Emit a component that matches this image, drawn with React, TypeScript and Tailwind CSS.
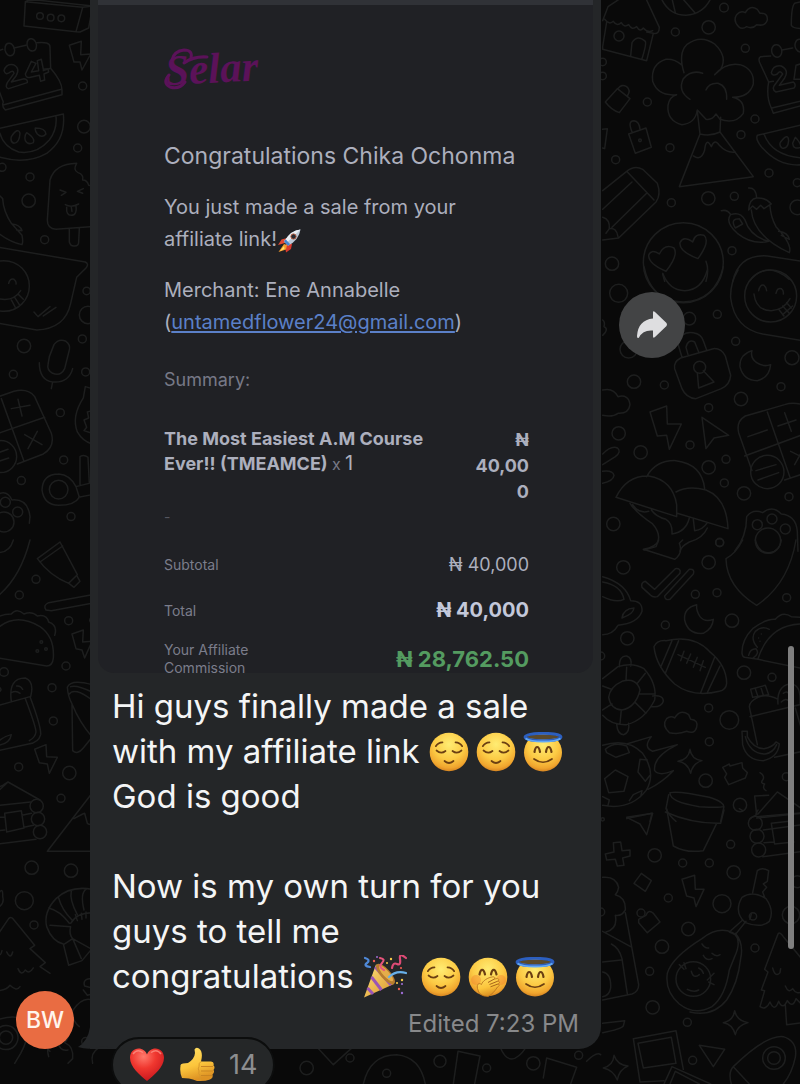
import type { ReactNode } from 'react';

type Dot = [number, number, number];
type Patch = { x: number; y: number; dots: Dot[]; lines: string[] };

// Each patch is drawn on a grid three times finer than the page.
const patches: Patch[] = [
  {
    x: 0,
    y: 0,
    dots: [
      [120, 48, 10], [152, 53, 10], [184, 55, 10], [248, 258, 12], [252, 380, 19], [233, 444, 12],
      [6, 502, 12], [90, 531, 12], [86, 602, 20], [134, 719, 12], [260, 873, 11], [264, 945, 26],
      [247, 1017, 12], [72, 1038, 20], [40, 1123, 12], [257, 1116, 12], [181, 1238, 12], [191, 1380, 12],
      [64, 1442, 12], [213, 1550, 12], [176, 1469, 28], [16, 1507, 15], [53, 1536, 15], [12, 858, 76],
      [2, 1370, 48], [12, 1566, 30],
    ],
    lines: [
      'M76 5 L248 22 L228 95 L72 78 Z M76 5 L90 -2 L278 18 L266 84 L240 96 L228 95 M248 22 L278 18',
      'M-4 152 L8 148 M42 144 L78 136 M110 128 Q150 124 150 140 L152 205 Q186 245 186 270 L186 284 L16 330 Q4 318 10 306 L-4 270 M152 205 L130 212 M12 314 L184 268',
      'M26 130 a14 19 -15 1 0 2 0z M92 116 a14 19 -15 1 0 2 0z',
      'M12 212 Q18 190 40 194 Q62 204 48 228 L34 246 L72 236 Q84 238 82 248 L26 266 Q14 264 22 248 L42 220 Q40 208 28 218 Q16 226 12 212Z',
      'M94 184 L76 222 Q78 236 92 232 L118 226 L122 244 L134 240 L132 222 L146 216 L144 206 L130 208 L124 178 L112 182 L116 212 L94 216 L108 190Z',
      'M-4 386 L190 342 Q198 420 140 460 Q80 494 0 472 M0 400 Q10 440 56 456 Q110 464 148 420 Q172 388 168 350 M34 410 q20-30 26-10 q-2 30-18 30 q-12-4-8-20z M80 398 q26 16 20 30 q-16 8-24-6 q-4-14 4-24z M106 384 q30 0 32 18 q-12 14-26 0 q-8-10-6-18z',
      'M208 136 L244 124 L242 164 L272 162 L246 210 L240 186 L222 186 Z',
      'M270 680 L168 688 Q142 686 142 660 L150 540 Q164 492 230 490 Q218 510 234 518 Q252 524 248 540 Q262 540 266 556 L276 558 M208 688 L208 726 Q212 740 224 738 Q236 738 236 726 L238 686 M180 570 L198 577 L184 586 M250 566 L232 574 L248 580 M196 614 Q214 624 236 612 M200 622 Q198 646 214 646 Q232 646 228 616 M214 622 L216 634',
      'M-4 584 L8 596 Q10 634 34 670 L66 706 Q70 726 66 734 Q30 726 -4 700 M36 672 Q60 674 66 692 L50 690',
      'M-4 742 L256 786 Q268 792 258 804 L230 832 L212 910 Q196 986 110 990 L-4 970 M26 850 q4-16 16-12 q8 6 6 14 M-4 896 Q40 906 62 872 M34 900 L46 922 M44 892 L58 914 M54 882 L70 898 M102 936 L114 950 L150 920 M130 948 L168 922',
      'M148 1070 L162 1034 Q176 1014 198 1024 Q212 1034 208 1050 L194 1106 Q182 1130 158 1120 Q140 1110 144 1094Z M118 1088 Q118 1140 158 1146 Q206 1150 218 1106 M158 1146 L154 1166',
      'M-4 1190 L42 1174 Q84 1164 104 1190 L154 1300 Q166 1340 130 1362 L52 1392 M4 1196 L72 1384 M-4 1300 L134 1252 M34 1226 L90 1216 M54 1198 L66 1248 M74 1304 L126 1334 M112 1294 L84 1346 M-4 1358 L24 1348 M-4 1384 L26 1374',
      'M276 1166 L256 1160 L250 1194 Q214 1250 232 1296 Q248 1324 276 1332 M276 1232 L262 1236 L266 1254 L252 1260 L260 1282 L252 1292 L276 1300',
      'M176 1422 Q210 1424 228 1460 L276 1448 M236 1492 L276 1484 M176 1516 Q224 1516 238 1492 M126 1470 Q128 1422 176 1422 M126 1470 Q132 1516 176 1516 M228 1460 L238 1492 M240 1454 L240 1370 Q252 1362 264 1372 L268 1450 M-4 1482 Q22 1470 36 1500 Q84 1496 90 1550 L88 1570',
    ],
  },
  {
    x: 0,
    y: 540,
    dots: [
      [108, 118, 12], [58, 165, 12], [206, 242, 12], [198, 378, 12], [156, 443, 12], [12, 396, 13],
      [160, 543, 12], [56, 681, 12], [208, 699, 20], [183, 775, 12], [95, 983, 20], [213, 992, 20],
      [73, 1082, 27], [102, 1155, 12], [110, 798, 20], [114, 837, 20], [120, 876, 20], [18, 1493, 20],
      [18, 1493, 36], [257, 1505, 12], [124, 306, 4], [112, 333, 4], [138, 327, 4],
    ],
    lines: [
      'M90 0 Q62 110 -4 166 M40 0 Q30 36 -4 38',
      'M112 56 L180 6 L232 104 L206 130 Q150 108 112 56Z M120 66 L188 18 M204 128 L222 142 L240 124 L230 106',
      'M276 164 L146 188 Q128 196 138 210 L154 212 L276 190 M276 230 Q262 240 276 252',
      'M-4 230 Q10 222 34 222 Q50 202 72 222 Q96 212 112 228 Q140 222 146 246 Q174 256 164 286 M-4 262 Q50 218 120 260 Q164 290 160 354 Q158 378 140 378 L-4 354',
      'M216 282 L250 270 L248 306 L276 304 L254 354 L246 330 L228 326Z',
      'M-4 496 L90 470 Q124 560 122 584 Q116 608 86 612 L-4 632 M76 476 Q108 560 108 576 Q106 592 88 602 M34 484 Q24 414 76 414 Q104 424 92 470 M50 438 Q62 436 68 448 M34 458 Q48 450 60 460 M-4 616 Q30 610 34 584 Q10 590 -4 604 M-4 440 Q10 450 -4 456',
      'M276 434 Q212 416 202 442 Q204 470 216 492 L218 632 Q232 646 250 624 L276 592 M216 492 Q240 550 276 590 M212 440 Q230 434 276 456 M208 462 Q222 440 276 480',
      'M104 628 L138 614 L140 650 L172 652 L148 700 L142 672 L118 668Z',
      'M-4 742 L8 736 L24 726 L120 780 M-4 752 L24 726 M-4 796 L92 786 M-4 912 L108 898 M-4 832 L12 832 M-4 872 L14 870 M14 820 L64 812 L72 864 L20 876Z M66 826 L94 820 M72 862 L100 856',
      'M276 760 L142 934 L276 934 M222 836 Q244 824 254 820 L262 850 Q270 856 276 852',
      'M-4 1060 Q10 1040 8 1070 Q14 1090 -4 1102',
      'M276 1048 Q210 1036 168 1076 Q130 1116 140 1160 Q156 1204 190 1212 L206 1276 L246 1262 L276 1226 M218 1196 L194 1212 M218 1196 L244 1256 M150 1156 L212 1160 Q206 1182 218 1196 L276 1228 M146 1104 Q180 1112 208 1150 M176 1074 Q186 1110 216 1140 M214 1052 Q208 1080 232 1124 M258 1048 Q240 1060 252 1110 M212 1150 Q230 1118 276 1118 M226 1124 l6 18 M244 1120 l2 18 M258 1116 l0 18',
      'M-4 1180 L26 1136 Q34 1128 42 1140 L104 1216 L90 1226 L136 1268 L120 1280 L150 1300 M-4 1352 Q20 1350 30 1336 Q50 1356 60 1340 M-4 1240 q6 10 10-8 M20 1236 q12 24 18 0 M54 1286 q10 24 22 4 q12 14 24-6',
      'M276 1316 Q246 1316 254 1338 L276 1344 M250 1350 L262 1366 L276 1362 M218 1412 Q246 1370 276 1380 M218 1412 Q214 1440 238 1460',
      'M-4 1438 Q60 1420 80 1450 Q90 1490 62 1540 L44 1570',
      'M146 1550 Q136 1516 160 1506 L146 1508 Q136 1524 150 1534 M166 1504 Q154 1470 172 1468 L186 1496 Q196 1462 208 1472 Q206 1496 194 1508 Q222 1520 218 1556 L204 1570 M176 1512 Q180 1534 204 1530 M278 1570 Q270 1540 296 1524 Q312 1510 340 1510',
    ],
  },
  {
    x: 596,
    y: 0,
    dots: [
      [238, 96, 12], [384, 23, 13], [338, 82, 20], [448, 145, 12], [69, 108, 15], [154, 306, 12],
      [132, 421, 4], [222, 443, 12], [59, 479, 12], [477, 357, 12], [435, 404, 12], [519, 519, 12],
      [604, 548, 12], [226, 608, 12], [337, 595, 20], [415, 589, 12], [408, 752, 12], [48, 791, 20],
      [604, 622, 22], [262, 788, 120], [20, 186, 11], [20, 228, 11],
    ],
    lines: [
      'M20 62 L36 20 L72 -4 M150 -4 L190 82 Q190 104 172 100 L152 96 M26 58 Q40 76 52 64 Q62 80 76 68 Q84 84 98 74 Q108 92 122 80 Q132 98 142 84 Q156 100 170 92 M32 66 L20 140 L20 148 L152 182 L172 100 M104 168 L108 128 Q124 102 148 124 Q152 132 138 176',
      'M196 -4 Q220 46 270 46 Q322 42 344 -4 M228 -4 L238 38 M260 -4 L298 40',
      'M428 80 Q410 62 422 44 Q434 30 448 38 Q462 14 484 28 L492 40 Q516 38 514 60 Q508 80 482 74 Q470 88 452 80 Q438 90 428 80Z',
      'M620 4 L596 10 Q586 20 586 76 Q590 86 620 86',
      'M264 218 Q246 160 272 134 Q314 102 356 132 Q396 170 374 208 L356 224 Q390 186 432 194 Q476 208 472 252 Q460 292 410 292 Q448 300 442 340 Q418 374 372 358 L360 342 Q348 362 330 358 L304 330 Q298 370 258 374 Q212 362 216 316 Q220 290 242 284 Q186 290 170 244 Q164 192 210 178 Q236 176 256 194 M282 298 Q244 274 262 236 Q286 208 320 220 M330 270 Q340 248 366 250 Q394 258 392 298',
      'M304 334 L312 402 L250 560 L472 530 L372 396 L374 352 M312 402 Q344 410 372 396 M292 468 Q316 484 326 450 Q330 410 346 440 Q356 414 370 436 Q392 460 418 456',
      'M28 306 L64 266 L102 296 L70 338 Q46 330 28 306Z M66 266 Q76 250 92 260 Q106 272 94 288',
      'M98 402 L150 384 L166 442 L118 460Z M108 396 Q94 362 114 362 Q130 364 132 388 M20 388 L34 386 L26 446 L20 444',
      'M20 572 L92 514 Q116 494 140 508 L184 550 Q196 584 180 606 L68 714 L20 720 M92 514 L174 600 M108 546 L20 628 M152 580 L48 682 M20 652 Q42 658 40 686 Q62 682 66 710 M40 686 L30 700',
      'M524 168 L494 170 Q484 176 494 194 L518 246 Q510 290 526 324 L532 340 L620 316 M518 246 L532 244 M528 324 L620 302 M558 150 L590 144 M540 134 a15 19 -10 1 0 2 0z M610 118 a15 19 -10 1 0 2 0z',
      'M526 218 Q532 194 556 198 Q580 210 566 234 L550 256 L592 246 Q602 254 594 264 L540 276 Q528 270 534 258 L560 222 Q552 208 544 222 Q530 230 526 218Z M620 190 L600 196 L594 238 L620 238',
      'M620 374 L484 406 Q478 418 496 440 Q548 502 620 494 M504 402 Q528 468 620 474 M554 426 q22-30 24-4 q-2 26-20 22 q-10-8-4-18z M598 412 q18 18 16 30 q-22 8-24-12z',
      'M376 632 Q396 628 404 644 M404 644 Q432 634 446 658 Q462 710 518 724 Q470 736 424 700 Q386 666 404 644 M414 676 Q406 656 430 656 L440 672 L418 684Z M458 564 Q480 562 482 594 M482 594 Q460 596 458 630 L470 618 L482 628 L494 616 L504 626 L526 612 Q508 592 482 594 M466 630 Q472 708 580 758 Q590 734 540 680 Q524 650 522 618 M548 694 Q576 698 580 718 L556 706',
      'M210 814 Q158 792 158 766 Q164 746 190 762 Q206 730 234 744 Q248 766 210 814Z M306 776 Q248 754 252 728 Q262 706 290 726 Q298 698 324 706 Q344 724 306 776Z M330 784 Q340 810 330 844 M200 822 L206 844',
      'M410 844 Q430 762 514 768 L620 784 M460 844 Q510 780 580 838',
    ],
  },
  {
    x: 596,
    y: 270,
    dots: [
      [68, 70, 27], [280, 146, 19], [364, 133, 12], [98, 238, 26], [419, 214, 12], [588, 263, 21],
      [114, 335, 20], [205, 345, 12], [555, 350, 12], [435, 387, 20], [338, 413, 12], [68, 490, 20],
      [282, 525, 12], [134, 547, 20], [390, 568, 12], [338, 592, 20], [385, 639, 12], [444, 670, 20],
      [579, 680, 12], [52, 762, 20], [371, 817, 12], [524, 78, 78], [514, 606, 50], [484, 764, 15],
      [528, 747, 15], [568, 777, 15], [516, 812, 38], [311, 292, 18],
    ],
    lines: [
      'M144 -10 Q164 94 262 96 Q358 92 382 -10 M200 10 Q220 62 266 62 Q318 60 334 0',
      'M426 0 Q402 40 404 84 Q416 176 500 192 L620 212 M488 62 q4-20 16-16 q8 6 8 16 M540 70 q4-18 16-14 q8 6 6 16 M474 72 Q480 122 526 122 Q564 120 582 86 M548 118 L564 138 M560 108 L580 130 M572 98 L586 114 M560 134 L590 108',
      'M236 296 Q232 276 254 264 L352 236 Q376 234 388 258 L404 316 Q402 344 376 356 L300 386 Q270 384 258 356Z M258 262 L246 222 Q254 182 292 188 Q316 192 322 212 L332 240 M276 254 L270 232 Q276 206 296 216 L308 246 M304 308 L308 354 L354 336 L322 302',
      'M468 242 Q430 254 432 290 Q442 332 484 332 Q520 324 524 284 Q502 292 482 278 Q462 264 468 242Z',
      'M20 360 Q52 352 66 380 Q98 372 102 404 Q98 432 66 430 Q50 442 20 436 M20 150 Q28 156 24 170 Q40 178 20 196 M20 552 Q46 526 64 534 Q78 544 58 560 L20 584 M20 604 Q50 600 54 616 Q52 632 20 640',
      'M162 426 L212 408 L214 462 L256 462 L220 538 L212 496 L184 498Z M318 442 L398 496 L354 504 L330 536Z',
      'M620 404 Q590 396 566 404 L448 438 Q420 454 428 488 L468 602 M514 426 L582 622 M446 558 L620 494 M456 500 L514 480 M546 468 L600 450 M566 428 L586 484 M566 630 L620 612 M584 544 L620 562 M620 540 L596 584 M480 602 L540 584 M486 630 L548 608',
      'M60 682 Q92 616 158 618 Q230 630 242 704 L242 740Z M152 620 Q180 570 240 572 Q318 582 326 656 M240 666 Q276 646 330 660 Q392 684 396 776 L244 730 M102 700 Q118 726 170 762 Q200 796 180 830 L144 840 M110 704 Q128 732 158 724 M166 720 Q180 740 210 748 Q230 760 228 792 Q270 786 280 744 M292 748 L296 782 Q320 780 334 758 M334 774 Q320 806 280 816 Q254 830 252 844',
      'M416 844 Q452 800 452 740 Q470 716 500 728 Q530 704 556 732 Q600 736 604 784 L606 844',
    ],
  },
  {
    x: 596,
    y: 540,
    dots: [
      [82, 82, 20], [338, 67, 20], [371, 8, 12], [298, 163, 12], [363, 158, 12], [572, 173, 12],
      [208, 255, 12], [408, 242, 20], [94, 295, 20], [444, 398, 20], [528, 412, 12], [338, 504, 12],
      [400, 540, 28], [340, 605, 12], [329, 722, 20], [432, 795, 20], [571, 710, 12], [14, 348, 12],
    ],
    lines: [
      'M188 0 Q180 22 142 28 L236 58 Q262 40 250 10 L260 0 M440 0 Q420 40 390 56 Q392 140 482 196 Q578 132 600 0 M478 0 Q488 40 520 38 Q552 34 556 0',
      'M138 142 Q134 128 148 124 L176 148 L238 86 Q256 84 252 100 L184 170 Q172 174 162 164Z M206 168 L280 88 Q298 86 292 102 L222 178 Q206 182 206 168Z',
      'M20 110 Q90 130 104 182 Q140 182 138 214 Q126 250 66 256 Q50 284 20 284 M20 126 Q76 136 84 178 Q60 190 20 170 M78 234 Q82 206 114 204 Q112 222 78 234Z',
      'M302 194 Q262 204 266 240 Q276 284 322 280 Q350 266 352 238 Q326 248 312 230 Q300 212 302 194Z',
      'M174 320 Q182 300 210 302 Q294 284 340 334 Q392 376 392 430 Q390 450 370 454 Q290 474 236 432 Q180 380 174 320Z M228 302 L194 382 M248 302 L208 400 M356 352 L314 458 M372 378 L334 458 M246 344 L328 382 M264 334 L254 362 M284 342 L272 370 M304 352 L292 382 M322 362 L312 392',
      'M438 342 Q436 300 470 266 Q510 236 538 238 Q560 212 586 230 L620 232 M446 352 Q438 350 438 336 M446 352 L486 358 L620 386 M486 356 Q520 252 620 252 M484 322 Q462 296 478 274 Q498 256 520 268 M458 346 Q462 326 480 326 Q492 340 472 354 M488 294 v0 M496 282 v0 M492 304 v0',
      'M20 416 L66 380 Q110 366 144 386 Q184 430 176 480 Q146 540 92 554 Q46 556 20 526 M38 472 Q42 440 78 424 Q122 412 132 450 Q120 502 78 510 Q44 508 38 472Z M92 382 L90 422 M148 400 L124 430 M176 462 L132 462 M150 520 L118 488 M72 550 L76 510 M20 510 L48 492 M20 438 L46 448 M70 380 Q70 346 92 348 Q110 354 104 378 M170 468 Q202 464 202 484 Q196 504 164 500 M62 552 Q64 584 84 584 Q102 576 98 550',
      'M220 578 Q196 556 212 536 Q224 526 236 534 Q252 506 278 524 L284 538 Q308 540 302 562 Q296 584 272 574 Q248 584 220 578Z',
      'M20 616 Q94 592 140 640 Q182 700 150 752 Q102 812 20 796 M28 628 Q54 604 92 618 L100 638 L60 652 L32 638Z M26 716 L58 690 L96 710 L84 754 L38 758Z M154 660 L132 658 L126 696 L148 724 L162 706 M100 782 L112 764 L138 752 L134 770 M20 770 L40 780 L36 796 M92 612 L166 590 Q140 622 170 634 L244 614 Q170 650 176 692 Q190 710 232 692 Q200 726 156 748',
      'M282 628 Q286 658 318 662 Q290 670 284 700 Q276 668 246 664 Q278 658 282 628Z',
      'M380 682 L400 672 L402 678 L438 668 L440 684 L454 698 L448 714 L398 734 L386 712 L392 702Z',
      'M462 530 L620 492 M460 500 Q460 484 486 472 Q514 460 546 478 M464 448 L508 436 L518 464 L470 472Z M478 446 L486 470 M494 440 L502 466 M460 500 L484 614 M546 492 Q542 440 580 432 Q616 430 612 490 M562 460 Q574 450 580 464 M556 486 Q570 472 580 484 M598 504 L620 580 M536 652 L620 634 M438 574 L454 574 L454 590 Q472 626 504 626 Q530 622 540 606 L550 612 Q546 652 502 662 Q452 662 440 614Z M448 590 Q462 642 508 642 Q532 638 542 614',
      'M492 698 Q508 708 500 720 Q492 730 506 732 Q498 746 510 752 M222 758 Q250 752 340 772 Q388 788 382 800 Q370 804 310 800 Q220 786 222 758Z M218 764 L210 806 Q220 828 240 844 M384 800 L374 844 M92 836 L168 820 L162 844',
      'M476 768 L518 766 M476 768 L482 824 L462 836 M486 822 L544 756 L620 808 M482 834 L620 820',
    ],
  },
  {
    x: 596,
    y: 810,
    dots: [
      [176, 136, 20], [404, 103, 12], [260, 159, 12], [340, 159, 12], [413, 187, 20], [217, 264, 12],
      [378, 281, 27], [277, 357, 20], [198, 410, 20], [477, 414, 12], [585, 315, 26], [161, 484, 12],
      [170, 592, 20], [274, 637, 12], [290, 751, 12], [292, 507, 52], [534, 744, 34], [534, 744, 19],
      [604, 215, 18], [478, 40, 21], [483, 79, 21], [488, 120, 21], [471, 319, 11], [135, 309, 12],
      [14, 306, 12], [20, 28, 5],
    ],
    lines: [
      'M92 22 L170 10 L152 74 L132 42Z M212 -4 L232 108 Q270 130 322 122 L362 40 M208 6 Q290 42 374 40 L384 0 M430 -4 L440 2',
      'M52 98 L74 96 L78 122 L102 120 L102 138 L80 144 L84 166 L64 168 L58 148 L32 150 L28 132 L54 126Z M136 190 L166 212 L148 244 L114 220Z M258 208 L296 196 L298 238 L324 238 L300 290 L294 264 L272 258Z',
      'M128 328 L150 316 Q158 296 172 310 L192 336 L154 368 L128 338Z',
      'M20 202 Q60 198 68 232 Q66 246 58 254 Q90 262 88 300 Q76 320 58 316 Q66 356 30 366 M88 308 L128 524 Q128 544 108 552 L20 570 M20 364 L104 410 M46 402 Q70 414 78 446 L94 552 M20 456 L76 450 M20 486 Q46 490 44 534 Q40 558 20 560 M20 640 L86 632 L82 648 Q76 658 20 668',
      'M470 248 L484 182 Q498 170 518 182 L514 214 L502 222 L512 232 L500 246 L506 262 M438 262 Q470 240 510 266 Q536 302 520 334 Q496 356 448 338 Q412 306 438 262Z M450 334 L418 374 L400 366 L440 330 M466 312 L462 328',
      'M318 386 Q366 348 410 368 Q440 388 416 440 L400 480 Q388 560 348 590 Q296 618 250 582 Q206 544 214 490 Q228 442 318 386Z M418 370 Q444 400 434 446 Q426 520 392 570 Q350 622 282 606 M318 402 q8 14 20 12 M348 430 q12 12 24 4 M322 436 q10 18 26 10 M250 464 L264 478 M264 458 L270 476 M334 510 L354 490 M338 516 L354 524 M286 484 q6 24 24 10 M308 474 q10 4 14 16 M274 538 q20 10 34 2',
      'M546 372 L506 478 L516 486 L496 540 L506 542 L492 590 Q510 602 522 576 Q536 608 548 574 Q560 602 574 572 Q590 596 600 566 L620 586 M546 372 Q552 364 562 380 L620 450 M530 474 q8 30 22 14 l2-12 M568 528 q10 24 22 8 q12 20 30 8 M568 584 L572 644 L620 638',
      'M620 8 L484 20 M486 0 L480 12 M620 44 L502 60 M526 40 L580 34 M526 40 L536 102 L594 96 M504 98 L534 96 M620 124 L500 140',
      'M416 602 Q422 632 456 638 Q424 646 418 674 Q410 642 382 638 Q412 632 416 602Z M54 736 Q64 766 96 768 Q70 778 64 810 Q52 780 22 774 Q52 766 54 736Z',
      'M112 686 L240 662 L262 778 M112 686 L132 816 L204 812 M126 700 L226 682 L240 760 L142 774Z M204 822 L228 770 L344 822 M222 822 L238 784 L310 822 M310 706 L386 718 L352 770Z',
      'M412 770 Q510 674 562 680 Q606 694 598 742 Q588 790 562 822 M412 770 Q396 786 406 822 M412 770 L460 822',
    ],
  },
  {
    x: 300,
    y: 1048,
    dots: [
      [20, 60, 20], [150, 30, 12], [260, 76, 12], [420, 40, 18], [560, 60, 12], [700, 46, 20], [836, 22, 12],
    ],
    lines: [
      'M50 -4 L100 50 L160 -4 M190 108 Q210 20 290 20 Q360 26 376 108 M460 108 L474 10 L540 24 L524 108 M600 -4 Q630 70 680 -4 M740 30 L830 58 L812 108 M740 30 L730 90 M860 40 Q890 10 902 20',
    ],
  },
];

function Wallpaper() {
  return (
    <svg
      className="absolute left-0 top-0 h-[1084px] w-[800px]"
      viewBox="0 0 800 1084"
      fill="none"
      stroke="#1d1e1e"
      strokeWidth="4.5"
      strokeLinecap="round"
      strokeLinejoin="round"
      aria-hidden="true"
    >
      {patches.map((p) => (
        <g key={`${p.x}-${p.y}`} transform={`translate(${p.x} ${p.y}) scale(0.3333)`}>
          {p.dots.map(([cx, cy, r], i) => (
            <circle key={i} cx={cx} cy={cy} r={r} />
          ))}
          {p.lines.map((d, i) => (
            <path key={i} d={d} />
          ))}
        </g>
      ))}
    </svg>
  );
}

function EmojiPaint() {
  return (
    <svg className="absolute h-0 w-0" aria-hidden="true">
      <defs>
        <radialGradient id="face" cx="0.5" cy="0.3" r="0.72">
          <stop offset="0" stopColor="#ffec73" />
          <stop offset="0.55" stopColor="#fccb45" />
          <stop offset="0.85" stopColor="#f0a52e" />
          <stop offset="1" stopColor="#cf7c1e" />
        </radialGradient>
        <radialGradient id="heart" cx="0.4" cy="0.25" r="0.8">
          <stop offset="0" stopColor="#ff7a6c" />
          <stop offset="0.45" stopColor="#f0372f" />
          <stop offset="1" stopColor="#c4141c" />
        </radialGradient>
        <linearGradient id="hand" x1="0" y1="0" x2="0.3" y2="1">
          <stop offset="0" stopColor="#ffe066" />
          <stop offset="0.6" stopColor="#fcc53c" />
          <stop offset="1" stopColor="#dd9223" />
        </linearGradient>
        <linearGradient id="cone" x1="0" y1="0" x2="1" y2="1">
          <stop offset="0" stopColor="#ffe27a" />
          <stop offset="1" stopColor="#d9932c" />
        </linearGradient>
      </defs>
    </svg>
  );
}

function Emoji({ label, children }: { label: string; children: ReactNode }) {
  return (
    <svg className="inline-block h-10 w-10 shrink-0" viewBox="0 0 40 40" role="img" aria-label={label}>
      {children}
    </svg>
  );
}

function Relieved() {
  return (
    <Emoji label="Relieved face">
      <circle cx="20" cy="20" r="19.3" fill="url(#face)" />
      <g fill="none" stroke="#6b3f12" strokeWidth="1.7" strokeLinecap="round">
        <path d="M6.800 14.200Q9 10.600 13.500 10.400M33.200 14.200Q31 10.600 26.500 10.400" />
        <path d="M7.500 18.500Q12 22.500 16.500 19M32.500 18.500Q28 22.500 23.500 19" />
        <path d="M15.500 29Q20 33 24.500 29" />
      </g>
    </Emoji>
  );
}

function Halo() {
  return (
    <Emoji label="Smiling face with halo">
      <circle cx="20" cy="20.500" r="19" fill="url(#face)" />
      <ellipse cx="20" cy="5" rx="16" ry="2.600" fill="#5b4a2c" />
      <ellipse cx="20" cy="5" rx="18" ry="3.700" fill="none" stroke="#2c5fc0" strokeWidth="2.800" />
      <path d="M2.500 6.500Q7 9.500 20 9.500T37.500 6.500" fill="none" stroke="#62a8f4" strokeWidth="1.800" />
      <g fill="none" stroke="#6b3f12" strokeWidth="2.200" strokeLinecap="round">
        <path d="M11.500 20Q12.300 15 14.200 15T17 20M23 20Q23.800 15 25.700 15T28.500 20" />
        <path d="M11 27Q20 33.500 29 27" strokeWidth="1.700" />
      </g>
    </Emoji>
  );
}

function Giggle() {
  return (
    <Emoji label="Face with hand over mouth">
      <circle cx="20" cy="20" r="19.300" fill="url(#face)" />
      <circle cx="8" cy="23" r="5" fill="#f2762e" opacity="0.350" />
      <circle cx="33" cy="23" r="5" fill="#f2762e" opacity="0.350" />
      <path d="M11.500 17.500Q12.300 12.800 14.200 12.800T17 17.500M23 17.500Q23.800 12.800 25.700 12.800T28.500 17.500" fill="none" stroke="#6b3f12" strokeWidth="2.200" strokeLinecap="round" />
      <path d="M9.500 31.500C8.500 27 11 25.500 13.500 27.500C14.500 24 19.500 20.500 25 19.800C27 19.500 27.500 21.500 26 22.200L29 21.600C31.300 21.500 31.200 23.500 29.700 24.200C32 24.200 32 26.200 30 27C31.800 27.200 31.500 29.200 29.500 30C27 34 24 37.500 20 39.500Q11 39.500 9.500 31.500Z" fill="url(#hand)" stroke="#b56e1c" strokeWidth="0.800" />
      <path d="M20 25.500L26 22.200M21.500 27.500L29.700 24.200M22.500 29.800L30 27" stroke="#a8651b" strokeWidth="1" fill="none" />
    </Emoji>
  );
}

function Party() {
  return (
    <svg className="inline-block h-11 w-11 shrink-0" viewBox="0 0 44 44" role="img" aria-label="Party popper">
      <path d="M1 42.500L13 9.500Q23 12 31 29Z" fill="url(#cone)" />
      <path d="M12.200 12L28 30M8.500 22L18.500 35M4.500 33L10 39" stroke="#9a55b5" strokeWidth="3" />
      <ellipse cx="22.500" cy="19" rx="5" ry="13" transform="rotate(-42 22.500 19)" fill="#b77c2e" />
      <ellipse cx="23" cy="18.500" rx="3" ry="10" transform="rotate(-42 23 18.500)" fill="#e5ad4b" />
      <g fill="none" strokeWidth="2.200" strokeLinecap="round">
        <path d="M17 3Q23 4 19 8T21 15" stroke="#e7547c" />
        <path d="M29 13Q30 7 34 9T37 4T43 3" stroke="#dd4b76" />
        <path d="M26 22Q33 15 43 18" stroke="#68b0ea" />
        <path d="M2 3Q8 5 4 8T7 12" stroke="#4f89d8" />
      </g>
      <g fill="#ef5d51"><circle cx="11" cy="6" r="1.200" /><circle cx="38" cy="13" r="1.100" /><circle cx="36" cy="34" r="1.200" /></g>
      <g fill="#f4c84a"><circle cx="28" cy="4" r="1.200" /><circle cx="39" cy="25" r="1.200" /><circle cx="34" cy="28" r="1.100" /><circle cx="24" cy="8" r="1" /></g>
      <g fill="#9c6bd1"><circle cx="14" cy="2" r="1" /><circle cx="39" cy="29" r="1.100" /><circle cx="39" cy="38" r="1.200" /></g>
    </svg>
  );
}

function Rocket() {
  return (
    <svg className="inline-block h-6 w-6" viewBox="0 0 24 24" role="img" aria-label="Rocket">
      <path d="M8 14L1 16L4.500 10.500L10 9Z" fill="#e04a35" />
      <path d="M10 14L15 15L14 20L9 23.500L8 17Z" fill="#d83a2e" />
      <path d="M7 15L1.500 23L9 20.500L10 16Z" fill="#f39a2b" />
      <path d="M7 17L3 22L7.500 20Z" fill="#ffe26b" />
      <path d="M23.500 .5Q14 1 7 12.500L11 16.800Q22 11 23.500 .5Z" fill="#bcc8d6" />
      <path d="M23.500 .5Q14 1 7 12.500L9 14.500Z" fill="#e8edf3" />
      <path d="M7 12.500L8.600 10.200L13.200 15.200L11 16.800Z" fill="#4585cf" />
      <circle cx="16.500" cy="7.500" r="2.600" fill="#252a33" stroke="#b0583c" strokeWidth="1" />
    </svg>
  );
}

function Heart() {
  return (
    <svg className="h-9 w-9" viewBox="0 0 36 36" role="img" aria-label="Red heart">
      <path d="M18 34C11 28.500 1 20 1 10.800C1 5 5 1.500 9.500 1.500C13.500 1.500 16.700 4 18 7.500C19.300 4 22.500 1.500 26.500 1.500C31 1.500 35 5 35 10.800C35 20 25 28.500 18 34Z" fill="url(#heart)" />
      <path d="M4 7Q8 1.500 14 5.500M22 5.500Q28 1.500 32 7" fill="none" stroke="#ff9b8f" strokeWidth="1.500" opacity="0.700" />
    </svg>
  );
}

function Thumb() {
  return (
    <svg className="h-9 w-9" viewBox="0 0 36 36" role="img" aria-label="Thumbs up">
      <path d="M1.500 19Q1 17 4 16.500L9 16Q15.500 12 16 6L15.500 2.500Q17 -.5 20 1.500Q24.500 5 22 14.500H32Q35.500 15 34.500 18.500Q36.500 20 34.500 23Q36 25 33.500 27.500Q34.500 31.500 31 32.500Q26 34.500 18 34Q14 32 10 31.500L3 31Q.5 25 1.500 19Z" fill="url(#hand)" />
      <path d="M22 19.500H34M22 24H34M22 28.500H33" stroke="#c98522" strokeWidth="1.100" />
      <path d="M22 14.500Q19.500 16 20 19.500Q18.500 22 20 24Q19 27 21 28.500Q20 31 22 33" fill="none" stroke="#d9982c" strokeWidth="1" />
    </svg>
  );
}

function Receipt() {
  return (
    <section className="mx-2 h-[673px] rounded-b-2xl border-t-[5px] border-[#303237] bg-[#202125] pl-[66px] pr-16 text-[#acafbd]">
      <svg className="-ml-2 mt-6 h-16 w-32" viewBox="0 0 128 64" role="img" aria-label="Selar">
        <text
          x="9"
          y="54"
          transform="rotate(-3 50 40)"
          className="fill-[#5b1259] font-['Liberation_Serif',serif] text-[43px] font-bold italic"
        >
          Selar
        </text>
        <path d="M28 34Q38 27 51 28" fill="none" stroke="#5b1259" strokeWidth="3" strokeLinecap="round" />
        <path d="M35 29Q37 21 28 21Q18 22 16 31" fill="none" stroke="#5b1259" strokeWidth="3" strokeLinecap="round" />
        <path d="M13 46Q6 54 14 58Q23 61 29 53" fill="none" stroke="#5b1259" strokeWidth="3" strokeLinecap="round" />
      </svg>
      <h1 className="mt-[47px] text-[23px] leading-8">Congratulations Chika Ochonma</h1>
      <p className="mt-[19px] text-[20px] leading-8">
        You just made a sale from your
        <br />
        affiliate link!
        <Rocket />
      </p>
      <p className="mt-[19px] text-[20px] leading-8">
        Merchant: Ene Annabelle
        <br />(
        <a href="mailto:untamedflower24@gmail.com" className="text-[#5b80c8] underline decoration-2 underline-offset-2">
          untamedflower24@gmail.com
        </a>
        )
      </p>
      <h2 className="mt-[30px] text-[18px] leading-6 text-[#777987]">Summary:</h2>
      <table className="mt-[35px] w-full table-fixed border-collapse text-left">
        <colgroup>
          <col className="w-[110px]" />
          <col />
          <col className="w-[60px]" />
        </colgroup>
        <tbody>
          <tr className="align-top">
            <th scope="row" colSpan={2} className="whitespace-nowrap text-[18px] font-bold leading-6">
              The Most Easiest A.M Course
              <br />
              Ever!! (TMEAMCE) <span className="text-[16px] font-normal text-[#777987]">x</span>{' '}
              <span className="text-[20px] font-normal leading-6">1</span>
            </th>
            <td className="text-right text-[18px] font-bold leading-[26px]">
              ₦<br />
              40,00
              <br />0
            </td>
          </tr>
          <tr className="h-9 align-top">
            <td colSpan={3} className="text-[14px] leading-6 text-[#55565f]">
              -
            </td>
          </tr>
          <tr className="h-[46px]">
            <th scope="row" className="text-[14px] font-normal text-[#7b7d8b]">Subtotal</th>
            <td colSpan={2} className="text-right text-[18px]">₦ 40,000</td>
          </tr>
          <tr className="h-[46px]">
            <th scope="row" className="text-[14px] font-normal text-[#7b7d8b]">Total</th>
            <td colSpan={2} className="text-right text-[20px] font-bold text-[#c3c8da]">₦ 40,000</td>
          </tr>
          <tr className="h-[52px]">
            <th scope="row" className="text-[14px] font-normal leading-[18px] text-[#7b7d8b]">Your Affiliate Commission</th>
            <td colSpan={2} className="whitespace-nowrap text-right text-[22px] font-bold text-[#549b60]">₦ 28,762.50</td>
          </tr>
        </tbody>
      </table>
    </section>
  );
}

export default function App() {
  return (
    <main className="relative h-screen overflow-hidden bg-[#090909] font-[Inter,'Liberation_Sans',sans-serif]">
      <Wallpaper />
      <EmojiPaint />
      <div className="relative grid grid-cols-[90px_minmax(0,511px)_minmax(0,1fr)]">
        <div className="flex items-end pl-4">
          <div className="flex h-[58px] w-[58px] items-center justify-center rounded-full bg-[#e96c42] text-[23px] font-medium text-[#fff4ec]">
            BW
          </div>
        </div>

        <article className="relative rounded-br-[22px] bg-[#242628]">
          <svg className="absolute -left-3 bottom-0 h-9 w-10" viewBox="0 0 40 36" aria-hidden="true">
            <path d="M12 0V14Q10 28 0 34Q12 38 24 33L40 36V0Z" fill="#242628" />
          </svg>
          <Receipt />
          <div className="relative px-[22px] pb-[11px] pt-[11px]">
            <div className="text-[33px] leading-[45px] text-[#f4f5f6]">
              <p>Hi guys finally made a sale</p>
              <p className="flex h-[45px] items-center whitespace-pre">
                <span>with my affiliate link </span>
                <span className="flex gap-[7px]">
                  <Relieved />
                  <Relieved />
                  <Halo />
                </span>
              </p>
              <p>God is good</p>
              <p className="mt-[45px]">Now is my own turn for you</p>
              <p>guys to tell me</p>
              <p className="flex h-[45px] items-center whitespace-pre">
                <span>congratulations </span>
                <span className="mr-[14px] flex">
                  <Party />
                </span>
                <span className="flex gap-[7px]">
                  <Relieved />
                  <Giggle />
                  <Halo />
                </span>
              </p>
            </div>
            <p className="mt-[11px] text-right text-[24px] leading-7 text-[#88898b]">Edited 7:23 PM</p>
          </div>
        </article>

        <div className="pl-[18px] pt-[292px]">
          <button
            type="button"
            aria-label="Forward message"
            className="flex h-[66px] w-[66px] items-center justify-center rounded-full bg-[#434445]"
          >
            <svg className="h-8 w-8" viewBox="0 0 32 32" aria-hidden="true">
              <path
                d="M17 3.500Q17 1.500 19 3L30.500 14Q31.500 15.500 30.500 17L19 28Q17 29.500 17 27.500V21.500Q7 20.500 3 28.500Q1 30 1 27Q2 11 17 9.500Z"
                fill="#dedee0"
              />
            </svg>
          </button>
        </div>
      </div>

      <div className="relative -mt-3 ml-[111px]">
        <button
          type="button"
          aria-label="14 reactions"
          className="flex h-14 items-center gap-[14px] rounded-full border-2 border-[#0c0d0d] bg-[#252728] px-4 text-[27px] text-[#8d8e90]"
        >
          <Heart />
          <Thumb />
          <span>14</span>
        </button>
      </div>

      <div className="absolute right-[6px] top-[646px] h-[303px] w-[6px] rounded-full bg-[#7f7f7f]" />
    </main>
  );
}
